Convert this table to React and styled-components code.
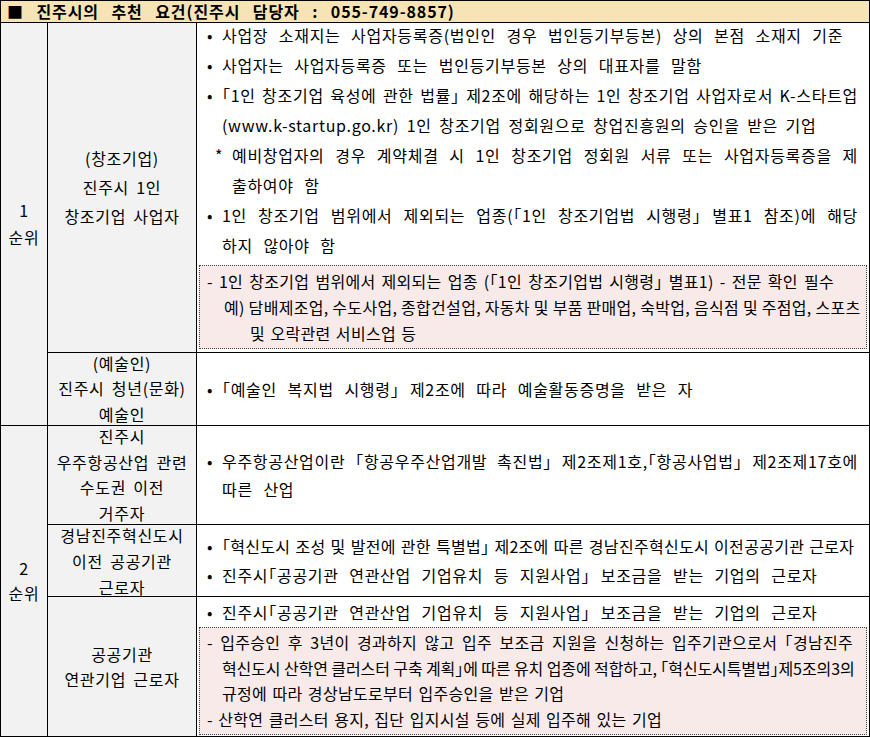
import React from "react";
import styled, { createGlobalStyle } from "styled-components";

const GlobalStyle = createGlobalStyle`
  html, body {
    margin: 0;
    padding: 0;
    background: #fff;
  }
  body {
    font-family: "Noto Sans CJK KR", "Noto Sans", sans-serif;
    color: #000;
  }
`;

const Table = styled.div`
  display: grid;
  grid-template-columns: 46px 148px minmax(0, 1fr);
  grid-template-rows: 21px 329px 72px 98px 71px 139px;
  gap: 1px;
  width: 870px;
  height: 737px;
  box-sizing: border-box;
  border: 1px solid #000;
  background: #000;
  font-size: 16px;
  letter-spacing: 0.7px;
  word-spacing: 6.3px;
  font-feature-settings: "halt";
`;

const Header = styled.div`
  grid-column: 1 / -1;
  background: #f6e4b7;
  font-weight: 700;
  line-height: 21px;
  padding-left: 6px;
  letter-spacing: 0.9px;
  word-spacing: 8px;
  white-space: nowrap;
`;

const RankCell = styled.div`
  grid-column: 1;
  grid-row: ${(p) => p.$rows};
  background: #f2f2f2;
  display: flex;
  flex-direction: column;
  align-items: center;
  justify-content: center;
  word-spacing: 0;
  line-height: ${(p) => p.$lh}px;
`;

const LabelCell = styled.div`
  grid-column: 2;
  grid-row: ${(p) => p.$row};
  background: #f2f2f2;
  display: flex;
  flex-direction: column;
  align-items: center;
  justify-content: center;
  text-align: center;
  white-space: nowrap;
  word-spacing: 3px;
  line-height: ${(p) => p.$lh}px;
`;

const DetailCell = styled.div`
  grid-column: 3;
  grid-row: ${(p) => p.$row};
  min-width: 0;
  background: #fff;
  display: flex;
  flex-direction: column;
  justify-content: ${(p) => (p.$center ? "center" : "flex-start")};
  padding: 0 2px;
  line-height: ${(p) => p.$lh}px;

  & > :first-child {
    margin-top: ${(p) => (p.$lift ? -p.$lift : 0)}px;
  }
`;

const Item = styled.div`
  display: flex;
  padding: 0 9px 0 ${(p) => 8 + (p.$indent || 0)}px;
`;

const Marker = styled.span`
  flex: none;
  width: ${(p) => p.$w || 15}px;
  letter-spacing: 0;
`;

const Lines = styled.div`
  flex: 1;
  min-width: 0;
`;

const Line = styled.div`
  white-space: nowrap;
  text-align: ${(p) => (p.$justify ? "justify" : "left")};
  text-align-last: ${(p) => (p.$justify ? "justify" : "auto")};
  letter-spacing: ${(p) => (p.$tight ? "0.3px" : "inherit")};
  word-spacing: ${(p) =>
    p.$justify ? "0.7px" : p.$tight ? "1.2px" : p.$ws ? `${p.$ws}px` : "inherit"};
`;

/* keeps 「…」 marks glued to their words so justification only widens spaces */
const Term = styled.span`
  display: inline-block;
`;

const NoteBox = styled.div`
  margin-top: ${(p) => p.$mt || 0}px;
  border: 1px dotted #444;
  background: #f9eaea;
  padding: 2px 13px 2px 7px;
  font-size: 16px;
  letter-spacing: 0.3px;
  word-spacing: 1.5px;
  line-height: ${(p) => p.$lh}px;
`;

const NoteLine = styled.div`
  white-space: nowrap;
  padding-left: ${(p) => p.$indent || 0}px;
  width: ${(p) => (p.$w ? `${p.$w}px` : "auto")};
  text-align: ${(p) => (p.$justify ? "justify" : "left")};
  text-align-last: ${(p) => (p.$justify ? "justify" : "auto")};
  letter-spacing: ${(p) => (p.$tight ? "-0.1px" : "inherit")};
  word-spacing: ${(p) => (p.$justify ? "0" : "inherit")};
`;

const Bullet = ({ children }) => (
  <Item>
    <Marker>•</Marker>
    <Lines>{children}</Lines>
  </Item>
);

export default function App() {
  return (
    <>
      <GlobalStyle />
      <Table>
        <Header>■ 진주시의 추천 요건(진주시 담당자 : 055-749-8857)</Header>

        <RankCell $rows="2 / 4" $lh={27}>
          <div>1</div>
          <div>순위</div>
        </RankCell>
        <LabelCell $row={2} $lh={29}>
          <div>(창조기업)</div>
          <div>진주시 1인</div>
          <div>창조기업 사업자</div>
        </LabelCell>
        <DetailCell $row={2} $lh={30} $lift={3}>
          <Bullet>
            <Line>사업장 소재지는 사업자등록증(법인인 경우 법인등기부등본) 상의 본점 소재지 기준</Line>
          </Bullet>
          <Bullet>
            <Line>사업자는 사업자등록증 또는 법인등기부등본 상의 대표자를 말함</Line>
          </Bullet>
          <Bullet>
            <Line $justify>
              <Term>「1인</Term> 창조기업 육성에 관한 <Term>법률」</Term> 제2조에 해당하는 1인 창조기업 사업자로서 K-스타트업
            </Line>
            <Line $ws={3.3}>(www.k-startup.go.kr) 1인 창조기업 정회원으로 창업진흥원의 승인을 받은 기업</Line>
          </Bullet>
          <Item $indent={8}>
            <Marker $w={17}>*</Marker>
            <Lines>
              <Line $justify>예비창업자의 경우 계약체결 시 1인 창조기업 정회원 서류 또는 사업자등록증을 제</Line>
              <Line>출하여야 함</Line>
            </Lines>
          </Item>
          <Bullet>
            <Line $justify>
              1인 창조기업 범위에서 제외되는 <Term>업종(「1인</Term> 창조기업법 <Term>시행령」</Term> 별표1 참조)에 해당
            </Line>
            <Line>하지 않아야 함</Line>
          </Bullet>
          <NoteBox $mt={5} $lh={26}>
            <NoteLine $justify $w={627}>
              - 1인 창조기업 범위에서 제외되는 업종 <Term>(「1인</Term> 창조기업법 <Term>시행령」</Term> 별표1) - 전문 확인 필수
            </NoteLine>
            <NoteLine $justify $indent={17} $w={627}>
              예) 담배제조업, 수도사업, 종합건설업, 자동차 및 부품 판매업, 숙박업, 음식점 및 주점업, 스포츠
            </NoteLine>
            <NoteLine $indent={43}>및 오락관련 서비스업 등</NoteLine>
          </NoteBox>
        </DetailCell>

        <LabelCell $row={3} $lh={25.5}>
          <div>(예술인)</div>
          <div>진주시 청년(문화)</div>
          <div>예술인</div>
        </LabelCell>
        <DetailCell $row={3} $lh={30} $center>
          <Bullet>
            <Line>「예술인 복지법 시행령」 제2조에 따라 예술활동증명을 받은 자</Line>
          </Bullet>
        </DetailCell>

        <RankCell $rows="4 / 7" $lh={25}>
          <div>2</div>
          <div>순위</div>
        </RankCell>
        <LabelCell $row={4} $lh={25.5}>
          <div>진주시</div>
          <div>우주항공산업 관련</div>
          <div>수도권 이전</div>
          <div>거주자</div>
        </LabelCell>
        <DetailCell $row={4} $lh={28} $center>
          <Bullet>
            <Line $justify>
              우주항공산업이란 <Term>「항공우주산업개발</Term> <Term>촉진법」</Term> <Term>제2조제1호,「항공사업법」</Term> 제2조제17호에
            </Line>
            <Line>따른 산업</Line>
          </Bullet>
        </DetailCell>

        <LabelCell $row={5} $lh={26}>
          <div>경남진주혁신도시</div>
          <div>이전 공공기관</div>
          <div>근로자</div>
        </LabelCell>
        <DetailCell $row={5} $lh={29} $center>
          <Bullet>
            <Line $tight>「혁신도시 조성 및 발전에 관한 특별법」 제2조에 따른 경남진주혁신도시 이전공공기관 근로자</Line>
          </Bullet>
          <Bullet>
            <Line>진주시「공공기관 연관산업 기업유치 등 지원사업」 보조금을 받는 기업의 근로자</Line>
          </Bullet>
        </DetailCell>

        <LabelCell $row={6} $lh={25}>
          <div>공공기관</div>
          <div>연관기업 근로자</div>
        </LabelCell>
        <DetailCell $row={6} $lh={30}>
          <Bullet>
            <Line>진주시「공공기관 연관산업 기업유치 등 지원사업」 보조금을 받는 기업의 근로자</Line>
          </Bullet>
          <NoteBox $lh={25.5}>
            <NoteLine $justify>
              - 입주승인 후 3년이 경과하지 않고 입주 보조금 지원을 신청하는 입주기관으로서 <Term>「경남진주</Term>
            </NoteLine>
            <NoteLine $indent={15} $justify $tight>
              혁신도시 산학연 클러스터 구축 <Term>계획」에</Term> 따른 유치 업종에 적합하고, <Term>「혁신도시특별법」제5조의3의</Term>
            </NoteLine>
            <NoteLine $indent={15}>규정에 따라 경상남도로부터 입주승인을 받은 기업</NoteLine>
            <NoteLine>- 산학연 클러스터 용지, 집단 입지시설 등에 실제 입주해 있는 기업</NoteLine>
          </NoteBox>
        </DetailCell>
      </Table>
    </>
  );
}
